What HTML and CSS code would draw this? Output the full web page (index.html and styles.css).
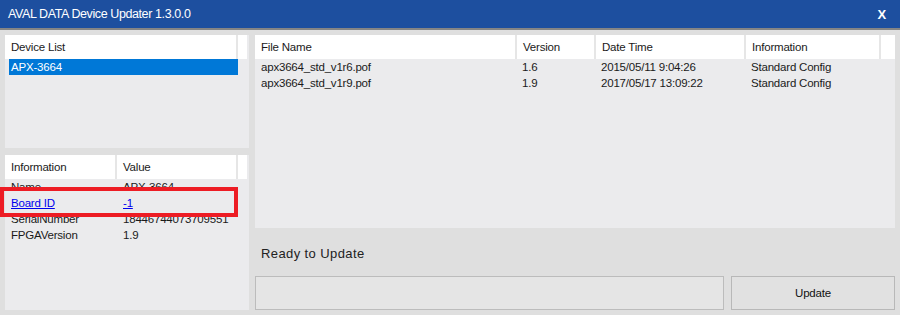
FILE: index.html
```html
<!DOCTYPE html>
<html lang="ja">
<head>
  <meta charset="UTF-8">
  <title>AVAL DATA Device Updater 1.3.0.0</title>
  <link rel="stylesheet" href="styles.css">
</head>
<body>

  <div class="window">
    <!-- Barra de título -->
    <div class="titlebar">
      <span class="title">AVAL DATA Device Updater 1.3.0.0</span>
      <span class="close">X</span>
    </div>

    <div class="content">
      <!-- Columna izquierda -->
      <div class="left">
        <div class="panel device-panel">
          <div class="head">
            <div class="cell dev-col">Device List</div>
            <div class="cell filler"></div>
          </div>
          <div class="row selected">APX-3664</div>
        </div>

        <div class="panel info-panel">
          <div class="head">
            <div class="cell key-col">Information</div>
            <div class="cell val-col">Value</div>
            <div class="cell filler"></div>
          </div>
          <div class="row"><span class="key-col">Name</span><span>APX-3664</span></div>
          <div class="row"><a class="key-col link" href="#">Board ID</a><a class="link" href="#">-1</a></div>
          <div class="row"><span class="key-col">SerialNumber</span><span>18446744073709551</span></div>
          <div class="row"><span class="key-col">FPGAVersion</span><span>1.9</span></div>
          <div class="highlight"></div>
        </div>
      </div>

      <!-- Columna derecha -->
      <div class="right">
        <div class="panel file-panel">
          <div class="head">
            <div class="cell name-col">File Name</div>
            <div class="cell ver-col">Version</div>
            <div class="cell date-col">Date Time</div>
            <div class="cell inf-col">Information</div>
            <div class="cell filler"></div>
          </div>
          <div class="row">
            <span class="name-col">apx3664_std_v1r6.pof</span>
            <span class="ver-col">1.6</span>
            <span class="date-col">2015/05/11 9:04:26</span>
            <span class="inf-col">Standard Config</span>
          </div>
          <div class="row">
            <span class="name-col">apx3664_std_v1r9.pof</span>
            <span class="ver-col">1.9</span>
            <span class="date-col">2017/05/17 13:09:22</span>
            <span class="inf-col">Standard Config</span>
          </div>
        </div>

        <div class="status">Ready to Update</div>

        <div class="actions">
          <div class="progress"></div>
          <button class="update">Update</button>
        </div>
      </div>
    </div>
  </div>

</body>
</html>
```

FILE: styles.css
```css
/* Estilos globales */
body {
  margin: 0;
  font-family: 'Liberation Sans', Arial, sans-serif;
  font-size: 11.5px;
  letter-spacing: -0.2px;
  color: #1a1a1a;
  background: #dfdfdf;
}

.window {
  width: 900px;
  height: 315px;
  background: #dfdfdf;
  overflow: hidden;
}

/* Barra de título */
.titlebar {
  height: 30px;
  background: #1d4f9f;
  border-bottom: 2px solid #858585;
  box-sizing: border-box;
  display: flex;
  align-items: center;
  justify-content: space-between;
  padding: 0 14px 0 8px;
  color: #fff;
}

.title {
  font-size: 12.5px;
  letter-spacing: -0.4px;
}

.close {
  font-weight: bold;
  font-size: 13px;
}

.content {
  display: flex;
  gap: 6px;
  padding: 5px 5px 5px 5px;
  height: 285px;
  box-sizing: border-box;
}

.left {
  width: 244px;
  display: flex;
  flex-direction: column;
  gap: 7px;
}

.right {
  flex: 1;
  display: flex;
  flex-direction: column;
}

/* Paneles */
.panel {
  background: #ebebed;
  position: relative;
}

.device-panel {
  height: 113px;
}

.info-panel {
  flex: 1;
}

.file-panel {
  height: 193px;
}

.head {
  display: flex;
  height: 24px;
  background: #fff;
  margin-right: 2px;
}

.cell {
  display: flex;
  align-items: center;
  padding-left: 6px;
  box-sizing: border-box;
  border-right: 2px solid #e6e6e6;
}

.cell.filler {
  flex: 1;
  border-right: none;
}

.row {
  display: flex;
  height: 16px;
  align-items: center;
  padding-left: 6px;
}

.row > * {
  box-sizing: border-box;
}

/* Lista de dispositivos */
.dev-col {
  width: 233px;
}

.selected {
  margin: 0 11px 0 4px;
  padding-left: 2px;
  background: #0078d7;
  color: #fff;
}

/* Información */
.info-panel .head .key-col {
  width: 112px;
}

.val-col {
  width: 121px;
}

.info-panel .row .key-col {
  width: 112px;
}

.link {
  color: #0000ee;
  text-decoration: underline;
}

.highlight {
  position: absolute;
  left: -5px;
  top: 32px;
  width: 238px;
  height: 30px;
  border: 4px solid #ed1c24;
  box-sizing: border-box;
}

/* Archivos */
.file-panel .head {
  margin-right: 0;
}

.name-col {
  width: 262px;
}

.ver-col {
  width: 79px;
}

.date-col {
  width: 150px;
}

.inf-col {
  width: 135px;
}

.file-panel .row .name-col {
  width: 261px;
}

/* Estado y botón */
.status {
  height: 48px;
  display: flex;
  align-items: center;
  padding-left: 6px;
  padding-top: 2px;
  font-size: 13px;
  letter-spacing: 0.4px;
  color: #222;
  box-sizing: border-box;
}

.actions {
  display: flex;
  gap: 7px;
  height: 34px;
}

.progress {
  width: 469px;
  border: 1px solid #bcbcbc;
  background: #e5e5e5;
  box-sizing: border-box;
}

.update {
  flex: 1;
  border: 1px solid #b8b8b8;
  background: #e1e1e1;
  font-family: 'Liberation Sans', Arial, sans-serif;
  font-size: 11.5px;
  letter-spacing: -0.2px;
  color: #111;
  padding: 0;
}
```
